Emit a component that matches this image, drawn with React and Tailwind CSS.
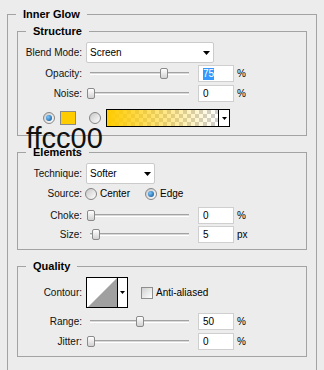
import React from "react";

const FONT = { fontFamily: '"Liberation Sans", Arial, sans-serif' };

function Label({ children }) {
  return (
    <div className="w-[64px] shrink-0 text-right text-[10px] leading-[12px] text-[#111]">
      {children}
    </div>
  );
}

function Arrow({ w = 7, h = 4 }) {
  return (
    <svg width={w} height={h} viewBox={`0 0 ${w} ${h}`} className="block">
      <polygon points={`0,0 ${w},0 ${w / 2},${h}`} fill="#000" />
    </svg>
  );
}

function Select({ value, width }) {
  return (
    <div
      className="h-[21px] flex items-center justify-between border border-[#cbcbcb] rounded-[2px] bg-white pl-[3px] pr-[3px]"
      style={{ width }}
    >
      <span className="text-[10px] leading-[12px] text-black">{value}</span>
      <Arrow />
    </div>
  );
}

function Slider({ value }) {
  return (
    <div className="relative w-[104px] h-[17px] flex items-center shrink-0">
      <div className="ml-[4px] w-[99px] h-[3px] border-t border-t-[#a2a2a2] border-b border-b-white bg-[#d9d9d9]" />
      <div
        className="absolute top-[3px] w-[8px] h-[11px] rounded-[2px] border border-[#8a8a8a] bg-gradient-to-b from-white to-[#d2d2d2]"
        style={{ left: 1 + Math.round(value * 0.973) }}
      />
    </div>
  );
}

function NumInput({ value, selected }) {
  return (
    <div className="ml-[8px] w-[36px] h-[17px] border border-[#cfcfcf] bg-white flex items-center pl-[4px]">
      {selected ? (
        <span className="bg-[#3399ff] text-white text-[10px] leading-[12px]">{value}</span>
      ) : (
        <span className="text-[10px] leading-[12px] text-black">{value}</span>
      )}
    </div>
  );
}

function SliderRow({ label, value, pos, unit = "%", selected, className }) {
  return (
    <div className={`h-[17px] flex items-center ${className}`}>
      <Label>{label}</Label>
      <div className="ml-[4px]" />
      <Slider value={pos} />
      <NumInput value={value} selected={selected} />
      <span className="ml-[3px] text-[10px] leading-[12px] text-black">{unit}</span>
    </div>
  );
}

function Radio({ checked }) {
  return (
    <div className="w-[12px] h-[12px] shrink-0 rounded-full border border-[#858585] bg-gradient-to-br from-[#c8c8c8] to-white flex items-center justify-center">
      {checked && (
        <div className="w-[6px] h-[6px] rounded-full bg-[radial-gradient(circle_at_35%_35%,#7cc8ff,#064a8c)]" />
      )}
    </div>
  );
}

function Group({ title, className = "", children }) {
  return (
    <fieldset className={`border border-[#a3a3a3] p-0 m-0 ${className}`}>
      <legend className="ml-[8px] px-[7px] text-[11px] leading-[14px] font-bold text-black">
        {title}
      </legend>
      {children}
    </fieldset>
  );
}

export default function App() {
  return (
    <div
      className="relative w-[324px] h-[370px] overflow-hidden bg-[#ececec] pt-[7px] pl-[7px]"
      style={FONT}
    >
      <fieldset className="w-[310px] h-[400px] border border-[#a3a3a3] p-0 m-0">
        <legend className="ml-[8px] px-[7px] text-[11px] leading-[14px] font-bold text-black">
          Inner Glow
        </legend>
        <div className="px-[9px] pt-[3px]">
          <Group title="Structure" className="pb-[8px]">
            <div className="mt-[4px] h-[21px] flex items-center gap-[4px]">
              <Label>Blend Mode:</Label>
              <Select value="Screen" width={128} />
            </div>
            <SliderRow className="mt-[2px]" label="Opacity:" value="75" pos={75} selected />
            <SliderRow className="mt-[3px]" label="Noise:" value="0" pos={0} />
            <div className="mt-[7px] h-[18px] flex items-center">
              <div className="ml-[25px]" />
              <Radio checked />
              <div className="ml-[5px] w-[16px] h-[14px] border border-[#8a8a8a] bg-[#ffcc00]" />
              <div className="ml-[13px]" />
              <Radio />
              <div className="ml-[5px] w-[124px] h-[18px] border border-black flex">
                <div className="flex-1 bg-[linear-gradient(to_right,#ffcc00,rgba(255,204,0,0)),repeating-conic-gradient(#cfcfcf_0_25%,#ffffff_0_50%)] [background-size:100%_100%,8px_8px]" />
                <div className="w-[11px] border-l border-black bg-white flex items-center justify-center">
                  <Arrow w={5} h={3} />
                </div>
              </div>
            </div>
          </Group>

          <Group title="Elements" className="mt-[9px] pb-[6px]">
            <div className="mt-[4px] h-[21px] flex items-center gap-[4px]">
              <Label>Technique:</Label>
              <Select value="Softer" width={69} />
            </div>
            <div className="mt-[2px] h-[16px] flex items-center">
              <Label>Source:</Label>
              <div className="ml-[3px] w-[60px] flex items-center">
                <Radio />
                <span className="ml-[3px] text-[10px] leading-[12px] text-black">Center</span>
              </div>
              <Radio checked />
              <span className="ml-[3px] text-[10px] leading-[12px] text-black">Edge</span>
            </div>
            <SliderRow className="mt-[5px]" label="Choke:" value="0" pos={0} />
            <SliderRow className="mt-[2px]" label="Size:" value="5" pos={5} unit="px" />
          </Group>

          <Group title="Quality" className="mt-[9px] pb-[6px]">
            <div className="mt-[4px] h-[31px] flex items-center">
              <Label>Contour:</Label>
              <div className="ml-[4px] w-[42px] h-[31px] border border-black flex bg-white">
                <div className="w-[30px] h-full">
                  <svg width="30" height="29" viewBox="0 0 30 29" className="block">
                    <polygon points="1,29 30,0 30,29" fill="#a0a0a0" />
                  </svg>
                </div>
                <div className="flex-1 border-l border-black flex items-center justify-center">
                  <Arrow w={5} h={3} />
                </div>
              </div>
              <div className="ml-[13px] w-[12px] h-[12px] border border-[#8e8e8e] bg-gradient-to-br from-[#d0d0d0] to-white" />
              <span className="ml-[3px] text-[10px] leading-[12px] text-black">Anti-aliased</span>
            </div>
            <SliderRow className="mt-[5px]" label="Range:" value="50" pos={50} />
            <SliderRow className="mt-[3px]" label="Jitter:" value="0" pos={0} />
          </Group>
        </div>
      </fieldset>

      <div className="absolute left-[26px] top-[124px] text-[29px] leading-[29px] text-[#111]">
        ffcc00
      </div>
    </div>
  );
}
